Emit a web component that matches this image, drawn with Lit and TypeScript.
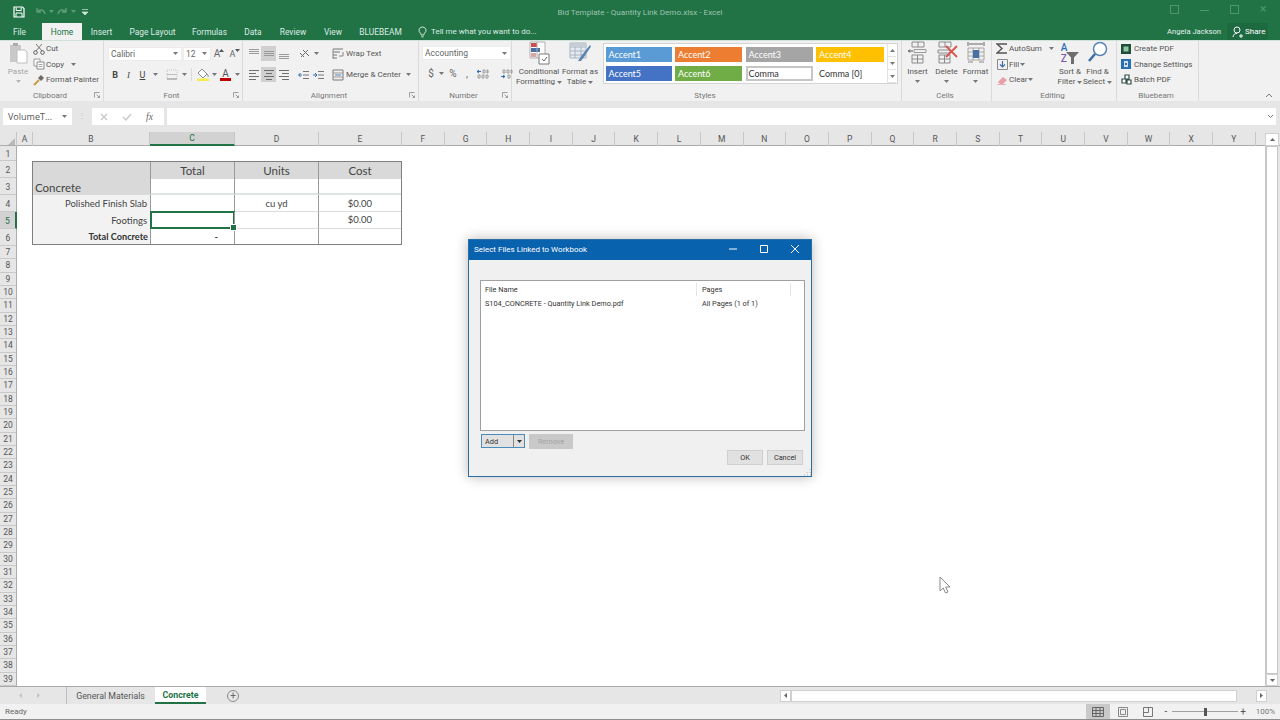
import { LitElement, html, css, svg } from "lit";
import { customElement } from "lit/decorators.js";

const ic = (w: number, h: number, inner: unknown) =>
  html`<svg width=${w} height=${h} viewBox="0 0 ${w} ${h}" fill="none">${inner}</svg>`;

const caret = (c = "#777") => ic(5, 3, svg`<path d="M0 0h5L2.5 3z" fill=${c}/>`);

const TABS = ["File", "Home", "Insert", "Page Layout", "Formulas", "Data", "Review", "View", "BLUEBEAM"];
const COLS = ["A", "B", "C", "D", "E", "F", "G", "H", "I", "J", "K", "L", "M", "N", "O", "P", "Q", "R", "S", "T", "U", "V", "W", "X", "Y"];
const ROWS = Array.from({ length: 39 }, (_, i) => i + 1);

const lines = (ys: number[], x0: number, x1: number, c = "#666") =>
  ys.map((y) => svg`<path d="M${x0} ${y + 0.5}H${x1}" stroke=${c}/>`);

const icons = {
  save: ic(12, 12, svg`<path d="M1 1h8.5L11 2.5V11H1z" stroke="#fff" stroke-width="1.2"/><path d="M3.2 1.5v3h5v-3M3 11V7h6v4" stroke="#fff"/>`),
  undo: ic(11, 9, svg`<path d="M2 1v4h4M2.5 5C4 2 9 2 10 7" stroke="#5e9d7c" stroke-width="1.4"/>`),
  redo: ic(11, 9, svg`<path d="M9 1v4H5M8.5 5C7 2 2 2 1 7" stroke="#5e9d7c" stroke-width="1.4"/>`),
  qat: ic(6, 6, svg`<path d="M0 .5h6M0 3h6L3 6z" stroke="#cfe5d9" fill="#cfe5d9" stroke-width=".7"/>`),
  bulb: ic(9, 12, svg`<path d="M4.5 1a3.4 3.4 0 0 0-2 6.2c.5.5.6 1 .7 1.8h2.6c.1-.8.2-1.3.7-1.8A3.4 3.4 0 0 0 4.5 1zM3.3 10.8h2.4" stroke="#d5e8dd"/>`),
  share: ic(12, 12, svg`<circle cx="5" cy="4" r="3" stroke="#fff"/><path d="M1 11c.3-2.5 2-3.6 4-3.6M7 10h4M9 8v4" stroke="#fff"/>`),
  paste: ic(22, 24, svg`<path d="M3 4h11v17H3z" fill="#c9c9c9"/><path d="M6 2h5v3H6z" fill="#adadad"/><path d="M10 9h8l2 2v11H10z" fill="#fff" stroke="#bdbdbd"/>`),
  cut: ic(12, 12, svg`<path d="M3 1l6 7M9 1L3 8" stroke="#777"/><circle cx="2.5" cy="9.5" r="1.8" stroke="#5a5a5a"/><circle cx="9.5" cy="9.5" r="1.8" stroke="#5a5a5a"/>`),
  copy: ic(12, 12, svg`<path d="M1 1h6v7H1z" fill="#fff" stroke="#9a9a9a"/><path d="M4 4h7v7H4z" fill="#fff" stroke="#8a8a8a"/><path d="M5.5 6.5h4M5.5 8.5h4" stroke="#a8a8a8"/>`),
  painter: ic(12, 12, svg`<path d="M1 11l5-5" stroke="#c79a3d" stroke-width="1.8"/><path d="M5 4l3 3 3-3-3-3z" fill="#6a6a6a"/>`),
  borders: ic(12, 11, svg`<path d="M1 1h10v9H1z" stroke="#c4c4c4" stroke-dasharray="1 1"/><path d="M1 5.5h10" stroke="#bdbdbd"/><path d="M1 10h10" stroke="#8f8f8f"/>`),
  fill: ic(14, 13, svg`<path d="M6 1l5 5-4 4-5-5z" fill="#fff" stroke="#8b8b8b"/><path d="M11 6c1 1.3 1.5 2 1 3" stroke="#8b8b8b"/><path d="M1 10.5h12V13H1z" fill="#f5ee4a"/>`),
  fontColor: html`<span class="fc-icon">A</span>`,
  alignV: (y: number) => ic(12, 11, svg`${lines([y, y + 2, y + 4], 1, 11, "#9a9a9a")}`),
  alignH: (kind: string) =>
    ic(12, 11, svg`<path d=${kind === "l" ? "M1 1.5h10M1 4.5h7M1 7.5h10M1 10.5h7" : kind === "c" ? "M1 1.5h10M3 4.5h6M1 7.5h10M3 10.5h6" : "M1 1.5h10M4 4.5h7M1 7.5h10M4 10.5h7"} stroke="#6e6e6e"/>`),
  orient: ic(12, 11, svg`<path d="M2 9l7-7M4 2l6 6M1 5l4 4" stroke="#6a6a6a"/>`),
  indent: ic(12, 10, svg`<path d="M5 1.5h6M5 5h6M5 8.5h6" stroke="#777"/><path d="M1 5h3" stroke="#2d6cb5"/><path d="M2.5 3L.5 5l2 2" stroke="#2d6cb5"/>`),
  outdent: ic(12, 10, svg`<path d="M5 1.5h6M5 5h6M5 8.5h6" stroke="#777"/><path d="M0 5h3" stroke="#2d6cb5"/><path d="M2 3l2 2-2 2" stroke="#2d6cb5"/>`),
  wrap: ic(12, 12, svg`<path d="M1 1h10M1 4h7M1 7h4M1 10h4" stroke="#777"/><path d="M1 1v10M11 4v4H7" stroke="#888"/>`),
  merge: ic(12, 12, svg`<path d="M1 1h10v10H1z" stroke="#7a7a7a"/><path d="M1 4h10M1 8h10" stroke="#9a9a9a"/><path d="M3 6h6" stroke="#4b7fbd"/>`),
  incDec: ic(13, 10, svg`<path d="M1 2.5h4M3 1L1 2.5 3 4" stroke="#2d6cb5"/><path d="M7 1h2v3H7zM11 1h1v3h-1zM2 6h2v3H2zM6 6h2v3H6zM10 6h2v3h-2z" stroke="#8a8a8a" stroke-width=".8"/>`),
  decDec: ic(13, 10, svg`<path d="M1 7.5h4M3 6l2 1.5L3 9" stroke="#2d6cb5"/><path d="M3 1h2v3H3zM7 1h2v3H7zM11 1h1v3h-1zM8 6h2v3H8z" stroke="#8a8a8a" stroke-width=".8"/>`),
  cond: ic(22, 24, svg`<path d="M2 1h15v16H2z" fill="#fff" stroke="#b0b0b0"/><path d="M3 2h6v4H3z" fill="#c7504f"/><path d="M3 7h9v4H3z" fill="#4a6fa5"/><path d="M3 12h5v4H3z" fill="#d8a7a5"/><path d="M9 1v16" stroke="#b0b0b0"/><path d="M11 13h10v10H11z" fill="#fff" stroke="#7a7a7a"/><path d="M14 18l2 2 3-4" stroke="#666"/>`),
  table: ic(24, 24, svg`<path d="M2 2h16v15H2z" fill="#e5ebf3" stroke="#a9b3bf"/><path d="M2 6h16M2 10h16M2 14h16M7 2v15M13 2v15" stroke="#a9b3bf"/><path d="M2 2h16v4H2z" fill="#c7cdd6"/><path d="M10 20l4-6 8-10c1 1 1 2 0 3l-6 9-3 4z" fill="#5a83b4"/>`),
  insert: ic(20, 23, svg`<path d="M4 1h12v5H4zM10 1v5M4 14h11v8H4zM9.5 14v8M4 18h11" stroke="#8b8b8b"/><path d="M6 8.5h12v3H6z" stroke="#9a9a9a"/><path d="M0 10h5M2 8.5L.5 10 2 11.5" stroke="#555"/>`),
  del: ic(22, 23, svg`<path d="M3 1h12v5H3zM9 1v5M3 14h11v8H3zM8.5 14v8M3 18h11M2 9h12v3H2z" stroke="#8b8b8b"/><path d="M10 5l11 11M21 5L10 16" stroke="#d9534f" stroke-width="1.8"/>`),
  format: ic(20, 23, svg`<path d="M2 1v4M18 1v4M3 3h14" stroke="#666"/><path d="M2 7h16v12H2zM7 7v12M13 7v12M2 11h16M2 15h16" stroke="#a6a6a6"/><path d="M7 9h6v8H7z" fill="#4a6fa5"/><path d="M2 21h5M13 21h5" stroke="#888"/>`),
  sigma: ic(12, 11, svg`<path d="M11 1H1l5 4.5L1 10h10" stroke="#555" stroke-width="1.4"/>`),
  fillDown: ic(11, 11, svg`<path d="M.5.5h10v10H.5z" stroke="#8a8a8a"/><path d="M5.5 2v6M3 5.5L5.5 8 8 5.5" stroke="#3a6ea5" stroke-width="1.2"/>`),
  eraser: ic(11, 11, svg`<path d="M1 8l5-5 4 3-4 4H3z" fill="#e8a0a6"/><path d="M0 10.5h9" stroke="#e0b4b8"/>`),
  funnel: ic(13, 13, svg`<path d="M0 1h13L8 6.5V13H5V6.5z" fill="#6e6e6e"/>`),
  find: ic(20, 23, svg`<circle cx="12" cy="8" r="6.5" fill="#fff" stroke="#5a85b5" stroke-width="1.5"/><path d="M7 13l-6 7" stroke="#3a6ea5" stroke-width="2.5"/>`),
  createPdf: ic(10, 10, svg`<path d="M0 0h10v10H0z" fill="#1f4d3a"/><path d="M2.5 2.5h5v5h-5z" fill="#8fc9a3"/>`),
  settings: ic(10, 10, svg`<path d="M0 0h10v10H0z" fill="#2a6fb0"/><path d="M3 2h4v6H3z" fill="#cfe3f4"/><path d="M4 4h2v2H4z" fill="#2a6fb0"/>`),
  batch: ic(11, 11, svg`<path d="M4 1h4v4H4zM1 5h4v4H1zM6 6h4v4H6z" fill="#fff" stroke="#2f4f45" stroke-width="1.2"/>`),
  launcher: ic(6, 6, svg`<path d="M.5 5.5v-5h5M2.5 2.5l3 3M3.5 5.5h2v-2" stroke="#8a8a8a" stroke-width=".8"/>`),
  x: ic(8, 8, svg`<path d="M1 1l6 6M7 1L1 7" stroke="#c6c6c6" stroke-width="1.3"/>`),
  check: ic(10, 8, svg`<path d="M1 4l3 3 5-6" stroke="#c6c6c6" stroke-width="1.3"/>`),
  min: ic(10, 10, svg`<path d="M1 5h8" stroke="#fff"/>`),
  max: ic(10, 10, svg`<path d="M1.5 1.5h7v7h-7z" stroke="#fff"/>`),
  close: ic(10, 10, svg`<path d="M1 1l8 8M9 1L1 9" stroke="#fff"/>`),
  grip: ic(8, 8, svg`<path d="M7 1v1M4 4v1M7 4v1M1 7h1M4 7h1M7 7h1" stroke="#b0b0b0"/>`),
  cursor: ic(12, 18, svg`<path d="M1 1v14l3.2-3 2.3 5 2.5-1-2.3-5H11z" fill="#fff" stroke="#8b8b8b"/>`),
  normal: ic(12, 10, svg`<path d="M.5.5h11v9H.5zM.5 3.5h11M.5 6.5h11M4 .5v9M8 .5v9" stroke="#666"/>`),
  layout: ic(10, 10, svg`<path d="M.5.5h9v9h-9z" stroke="#888"/><path d="M2.5 2.5h5v5h-5z" stroke="#888"/>`),
  pageBreak: ic(10, 10, svg`<path d="M.5.5h9v9h-9zM5.5.5v5h-5" stroke="#777"/>`),
};

@customElement("app-root")
export class AppRoot extends LitElement {
  static styles = css`
    :host {
      display: block;
      width: 1280px;
      height: 720px;
      overflow: hidden;
      position: relative;
      font-family: Roboto, "Open Sans", sans-serif;
      font-size: 8px;
      color: #555;
      background: #fff;
    }
    * { box-sizing: border-box; }
    svg { display: block; flex: none; }
    .app { display: flex; flex-direction: column; height: 720px; }

    .titlebar {
      height: 23px;
      background: #217346;
      display: grid;
      grid-template-columns: 1fr auto 1fr;
      align-items: center;
    }
    .qat { display: flex; align-items: center; padding-left: 13px; gap: 3px; }
    .qat .spacer { width: 4px; }
    .qat .push { margin-left: 3px; }
    .doc { color: #9cc4ad; font-size: 8.1px; }
    .win { display: flex; justify-content: flex-end; gap: 21px; padding-right: 11px; }
    .win .ctl { width: 9px; height: 9px; border: 1px solid #4f9570; }
    .win .ctl.dash { border-width: 1px 0 0; margin-top: 5px; }
    .win .ctl.none { border: none; color: #4f9570; font-size: 12px; line-height: 9px; }

    .tabs {
      height: 17px;
      background: #217346;
      display: grid;
      grid-template-columns: 42px 40px 39px 63px 51px 36px 44px 36px 59px 1fr auto;
      align-items: stretch;
      color: #dcebe3;
      font-size: 8.4px;
    }
    .tab { display: flex; align-items: center; justify-content: center; }
    .tab.first { padding-right: 3px; }
    .tab.on { background: #f1f1f1; color: #217346; }
    .tell { display: flex; align-items: center; gap: 4px; padding-left: 8px; font-size: 8px; }
    .user { display: flex; align-items: center; color: #e6f1eb; font-size: 7.6px; }
    .share {
      display: flex; align-items: center; gap: 1px;
      margin: 0 12px 0 6px; padding-left: 5px; height: 17px; width: 41px;
      background: #1e6a40; color: #fff; font-size: 8px;
    }

    .ribbon {
      height: 61px;
      background: #f1f1f1;
      display: flex;
      border-top: 1px solid #cfe3d8;
    }
    .group {
      display: flex; flex-direction: column; flex: none;
      border-right: 1px solid #dadada; height: 60px;
    }
    .g-clip { width: 104px; }
    .g-font { width: 139px; }
    .g-align { width: 176px; }
    .g-num { width: 93px; }
    .g-style { width: 390px; }
    .g-cells { width: 90px; }
    .g-edit { width: 125px; }
    .g-blue { width: 82px; }
    .group-body { flex: 1; display: flex; min-height: 0; }
    .group-label {
      height: 12px; display: grid; grid-template-columns: 1fr auto 1fr;
      align-items: center; color: #777; padding-right: 3px;
    }
    .group-label .launch { justify-self: end; }

    .big {
      display: flex; flex-direction: column; align-items: center;
      line-height: 10px; color: #555; flex: none;
    }
    .big .pic { height: 23px; display: flex; align-items: center; justify-content: center; margin-bottom: 3px; }
    .big .c { height: 8px; display: flex; align-items: center; justify-content: center; }
    .big .t { display: flex; align-items: center; gap: 2px; white-space: nowrap; }

    .paste { width: 28px; margin-left: 4px; color: #a5a5a5; }
    .stack { display: flex; flex-direction: column; }
    .stack .ln { height: 15.5px; display: flex; align-items: center; gap: 1px; white-space: nowrap; }
    .clip-stack { margin-left: 1px; }

    .two { display: flex; flex-direction: column; gap: 6px; padding-top: 5px; }
    .rw { display: flex; align-items: center; height: 15px; }
    .ib { height: 15px; display: flex; align-items: center; justify-content: center; flex: none; }
    .w6 { width: 6px; } .w7 { width: 7px; } .w8 { width: 8px; } .w10 { width: 10px; }
    .w13 { width: 13px; } .w14 { width: 14px; } .w15 { width: 15px; } .w16 { width: 16px; }
    .on-bg { background: #d0d0d0; }
    .vsep { width: 1px; height: 13px; background: #d8d8d8; margin: 0 3px; flex: none; }
    .gap6 { width: 6px; flex: none; }
    .gap4 { width: 4px; flex: none; }
    .font-pad { padding-left: 4px; }
    .combo {
      height: 14px; background: #fff; border: 1px solid #ececec;
      display: flex; align-items: center; justify-content: space-between;
      padding: 0 3px 0 2px; color: #666; font-size: 8.5px; flex: none;
    }
    .c-font { width: 74px; }
    .c-size { width: 28px; margin-left: 1px; }
    .c-acc { width: 89px; }
    .gl { font-size: 10px; color: #666; }
    .gl.b { font-weight: 700; font-size: 9px; color: #444; }
    .gl.i { font-style: italic; font-size: 9px; color: #444; font-family: "Liberation Serif", serif; }
    .gl.u { text-decoration: underline; font-size: 9px; color: #444; }
    .gl.s { font-size: 9px; }
    .sup { width: 4px; height: 3px; margin: -6px 0 0 0; display: flex; }
    .fc-icon { display: flex; justify-content: center; border-bottom: 3px solid #c00000; height: 12px; line-height: 9px; font-size: 10px; width: 11px; color: #555; }
    .align-pad { padding-left: 3px; }
    .tx-gap { margin-left: 2px; white-space: nowrap; }
    .wrapbtn { margin-left: 13px; }
    .mergebtn { margin-left: 5px; }
    .mcaret { margin-left: 3px; }
    .num-pad { padding-left: 3px; }
    .num-row { padding-left: 4px; }
    .num-row .spread { margin-left: 9px; }

    .cond { width: 46px; margin-left: 4px; }
    .fmt { width: 36px; }
    .gallery {
      margin: 2px 0 0 5px; width: 295px; height: 41px;
      background: #fff; border: 1px solid #d4d4d4; display: flex; flex: none;
    }
    .swatches {
      flex: 1; display: grid; grid-template-columns: 66px 67px 67px 68px;
      grid-template-rows: 15px 15px; gap: 4px 3.5px; padding: 3px 0 0 1.5px;
      font-family: Lato, "Open Sans", sans-serif; font-size: 9px;
    }
    .sw { display: flex; align-items: center; padding-left: 3px; color: #fff; }
    .a1 { background: #5b9bd5; } .a2 { background: #ed7d31; } .a3 { background: #a5a5a5; }
    .a4 { background: #ffc000; } .a5 { background: #4472c4; } .a6 { background: #70ad47; }
    .comma { background: #fff; color: #333; outline: 2px solid #c6c6c6; outline-offset: -2px; }
    .comma0 { background: #fff; color: #333; }
    .gscroll { width: 9px; margin-right: 1px; display: flex; flex-direction: column; border-left: 1px solid #e3e3e3; }
    .gscroll .b { flex: 1; display: flex; align-items: center; justify-content: center; border-bottom: 1px solid #e3e3e3; }
    .up { transform: rotate(180deg); }
    .cell-btn { width: 29px; }
    .cell-pad { padding-left: 1px; }
    .edit-stack { padding-left: 4px; width: 64px; flex: none; }
    .edit-stack .pic { width: 12px; display: flex; justify-content: center; flex: none; }
    .sortbtn { width: 28px; }
    .findbtn { width: 27px; }
    .sort-icon { display: flex; align-items: flex-end; justify-content: center; height: 23px; width: 26px; }
    .az-col { display: flex; flex-direction: column; font-size: 10px; font-weight: 500; line-height: 10.5px; margin-right: -1px; }
    .az-col .a { color: #2f6fb5; }
    .az-col .z { color: #7e57a8; }
    .blue-stack { padding-left: 4px; }
    .blue-stack .ln { gap: 3px; }
    .blue-stack .pic { width: 10px; display: flex; justify-content: center; flex: none; }
    .collapse { flex: 1; display: flex; align-items: flex-end; justify-content: flex-end; padding: 0 7px 3px 0; }

    .fbar {
      height: 31px; background: #e6e6e6; padding: 7px 4px 0 3px;
      display: flex; align-items: flex-start; flex: none;
    }
    .namebox {
      width: 69px; height: 17px; background: #fff; display: flex; align-items: center;
      justify-content: space-between; padding: 0 5px; font-family: "Open Sans", sans-serif; font-size: 9px; color: #555;
    }
    .dots { width: 20px; text-align: center; line-height: 15px; color: #bbb; font-size: 8px; }
    .fx {
      width: 72px; height: 17px; background: #fff; display: flex; align-items: center;
      gap: 14px; padding-left: 8px;
    }
    .fx i { font-family: "Liberation Serif", serif; font-size: 9.5px; color: #666; }
    .finput {
      flex: 1; height: 17px; margin-left: 3px; background: #fff; display: flex; align-items: center;
      justify-content: flex-end; padding-right: 2px;
    }

    .colhead {
      height: 14px; background: #e6e6e6; display: grid; flex: none;
      grid-template-columns: 17px 16px 117px 85px 84px 83px repeat(20, 42.7px) 1fr 15px;
      border-bottom: 1px solid #ababab; font-size: 8.5px; color: #555;
    }
    .ch { display: flex; align-items: center; justify-content: center; border-right: 1px solid #c6c6c6; padding-bottom: 1px; }
    .ch.sel { background: #d2d2d2; border-bottom: 2px solid #217346; height: 14px; color: #217346; }
    .ch.plain { border: none; }
    .corner { align-items: flex-end; justify-content: flex-end; padding: 0 1px 1px 0; }
    .vbtn { display: flex; align-items: center; justify-content: center; background: #fff; border: 1px solid #d0d0d0; margin: 1px 1px 0 0; }

    .sheet { flex: 1; display: flex; min-height: 0; background: #fff; }
    .rowhead { width: 17px; background: #e6e6e6; display: flex; flex-direction: column; border-right: 1px solid #ababab; flex: none; font-size: 8.5px; }
    .rh { height: 13.34px; display: flex; align-items: center; justify-content: center; border-bottom: 1px solid #c9c9c9; color: #555; flex: none; }
    .rh.r1 { height: 15px; padding-top: 2px; }
    .rh.tall { height: 17px; padding-top: 2px; }
    .rh.sel { background: #d2d2d2; color: #217346; margin-right: -1px; border-right: 2px solid #217346; }
    .canvas { flex: 1; padding: 15px 0 0 15px; }
    .tbl {
      width: 370px; height: 84px; border: 1.5px solid #7f7f7f; display: grid;
      grid-template-columns: 117px 84px 84px 1fr; grid-template-rows: 16.5px 16.5px 17px 16.5px 1fr;
      font-family: Lato, "Open Sans", sans-serif; color: #444; font-size: 9.5px;
    }
    .cl { display: flex; align-items: center; justify-content: center; border-left: 1px solid #9a9a9a; border-bottom: 1px solid #dcdcdc; position: relative; }
    .cl.h { background: #d9d9d9; font-size: 11.5px; border-bottom: none; }
    .cl.n { border-left: none; background: #d9d9d9; grid-row: span 2; align-items: flex-end; justify-content: flex-start; padding-left: 2px; font-size: 11.5px; line-height: 14px; border-bottom: none; }
    .cl.t3 { border-bottom: 2px solid #dfe6e2; }
    .cl.lab { background: #f2f2f2; border-left: none; justify-content: flex-end; padding-right: 3px; border-bottom: none; }
    .cl.tot { font-weight: 700; font-size: 9.2px; padding-right: 2px; color: #333; }
    .cl.last { border-bottom: none; }
    .cl.dash { justify-content: flex-end; padding-right: 16px; font-weight: 700; }
    .cl.active::after {
      content: ""; position: absolute; inset: -1px; border: 2px solid #217346;
    }
    .cl.active::before {
      content: ""; position: absolute; right: -3px; bottom: -3px; width: 5px; height: 5px;
      background: #217346; border: 1px solid #fff; z-index: 1;
    }
    .vscroll { width: 15px; flex: none; background: #e6e6e6; display: flex; flex-direction: column; border-left: 1px solid #c9c9c9; padding-right: 2px; }
    .vthumb { flex: 1; background: #fff; border: 1px solid #c6c6c6; }
    .vb { height: 12px; background: #fff; border: 1px solid #d0d0d0; display: flex; align-items: center; justify-content: center; flex: none; }

    .sheetbar {
      height: 18px; background: #e6e6e6; display: flex; align-items: stretch; flex: none;
      border-top: 1px solid #a9a9a9; font-size: 8.8px;
    }
    .nav { width: 67px; display: flex; align-items: center; justify-content: center; gap: 13px; padding-right: 8px; border-right: 1px solid #bdbdbd; flex: none; }
    .stab { width: 87px; display: flex; align-items: center; justify-content: center; color: #555; flex: none; }
    .stab.on { width: 51px; margin-left: 1px; background: #fff; color: #217346; font-weight: 700; border-bottom: 2px solid #217346; }
    .plus { margin-left: 21px; width: 14px; display: flex; align-items: center; }
    .plus span { width: 12px; height: 12px; border: 1px solid #8a8a8a; border-radius: 50%; display: flex; align-items: center; justify-content: center; color: #666; font-size: 10px; line-height: 10px; }
    .hs { margin-left: 539px; width: 487px; display: flex; align-items: center; }
    .hs .b { width: 11px; height: 12px; background: #fff; border: 1px solid #cfcfcf; display: flex; align-items: center; justify-content: center; flex: none; }
    .hs .thumb { width: 446px; height: 12px; background: #fff; border: 1px solid #d0d0d0; flex: none; }
    .hs .rest { flex: 1; }
    .r90 { transform: rotate(-90deg); }
    .l90 { transform: rotate(90deg); }

    .status {
      height: 16px; background: #f1f1f1; display: flex; align-items: center; flex: none;
      border-bottom: 1px solid #8e8e8e; padding-left: 5px; color: #666;
    }
    .views { margin-left: auto; display: flex; align-items: center; height: 15px; }
    .vw { height: 15px; display: flex; align-items: center; justify-content: center; flex: none; width: 25px; }
    .vw.on { background: #c9c9c9; width: 24px; }
    .zoom { display: flex; align-items: center; margin-left: 2px; }
    .zoom .pm { width: 8px; text-align: center; color: #555; font-size: 10px; flex: none; }
    .slider { width: 66px; height: 1px; background: #a0a0a0; margin: 0 1px 0 2px; display: flex; align-items: center; justify-content: center; flex: none; }
    .slider span { width: 3px; height: 8px; background: #555; flex: none; }
    .pct { width: 33px; text-align: right; padding-right: 5px; flex: none; color: #777; }

    .dialog {
      position: absolute; left: 468px; top: 239px; width: 344px; height: 238px;
      background: #f0f0f0; border: 1px solid #2c6ea3;
      box-shadow: 0 0 12px rgba(0, 0, 0, 0.28); display: flex; flex-direction: column;
      color: #333; font-size: 7.3px;
    }
    .dtitle {
      height: 20px; background: #0862ae; color: #fff; display: flex; align-items: center;
      padding: 0 0 2px 5px; flex: none; font-size: 8px;
    }
    .dtitle .ctls { margin-left: auto; display: flex; gap: 21px; padding-right: 11px; }
    .dbody { flex: 1; padding: 20px 6px 0 11px; display: flex; flex-direction: column; position: relative; }
    .list { height: 151px; background: #fff; border: 1px solid #a0a0a0; padding-top: 1px; flex: none; }
    .lrow { display: grid; grid-template-columns: 216px 94px 1fr; height: 14px; align-items: center; }
    .lrow span { padding-left: 4px; white-space: nowrap; height: 13px; display: flex; align-items: center; }
    .lhead span:nth-child(1), .lhead span:nth-child(2) { border-right: 1px solid #e5e5e5; }
    .lhead span:nth-child(2), .data span:nth-child(2) { padding-left: 5px; }
    .dbtns { display: flex; gap: 4px; margin-top: 3px; padding-left: 1px; align-items: flex-start; }
    .split {
      width: 44px; height: 14px; border: 1.5px solid #4a8bbb; background: #e1e1e1;
      display: flex; align-items: center;
    }
    .split .lab { width: 31px; padding-left: 3px; }
    .split .arr { flex: 1; height: 100%; border-left: 1px solid #888; display: flex; align-items: center; justify-content: center; }
    .disabled { width: 44px; height: 15px; background: #c9c9c9; color: #a3a3a3; display: flex; align-items: center; justify-content: center; }
    .dfoot { display: flex; justify-content: flex-end; gap: 4px; padding-right: 2px; margin-top: 1px; }
    .btn { width: 36px; height: 15px; background: #e1e1e1; border: 1px solid #cfcfcf; display: flex; align-items: center; justify-content: center; }
    .grip { position: absolute; right: 0; bottom: 0; }
    .cursor { position: absolute; left: 939px; top: 576px; }
  `;

  renderRibbon() {
    return html`
      <div class="ribbon">
        <div class="group g-clip">
          <div class="group-body">
            <div class="big paste">
              <div class="pic">${icons.paste}</div>
              <div class="t">Paste</div>
              <div class="c">${caret("#b5b5b5")}</div>
            </div>
            <div class="stack clip-stack">
              <div class="ln">${icons.cut} Cut</div>
              <div class="ln">${icons.copy} Copy &nbsp;&nbsp;${caret()}</div>
              <div class="ln">${icons.painter} Format Painter</div>
            </div>
          </div>
          ${this.label("Clipboard")}
        </div>
        <div class="group g-font">
          <div class="group-body">
            <div class="two font-pad">
              <div class="rw">
                <div class="combo c-font">Calibri ${caret()}</div>
                <div class="combo c-size">12 ${caret()}</div>
                <div class="ib w16"><span class="gl">A</span><span class="sup up">${caret("#555")}</span></div>
                <div class="ib w15"><span class="gl s">A</span><span class="sup">${caret("#555")}</span></div>
              </div>
              <div class="rw">
                <div class="ib w14"><span class="gl b">B</span></div>
                <div class="ib w13"><span class="gl i">I</span></div>
                <div class="ib w15"><span class="gl u">U</span></div>
                <div class="ib w10">${caret()}</div>
                <div class="gap4"></div>
                <div class="ib w16">${icons.borders}</div>
                <div class="ib w8">${caret()}</div>
                <div class="vsep"></div>
                <div class="ib w16">${icons.fill}</div>
                <div class="ib w7">${caret()}</div>
                <div class="ib w15">${icons.fontColor}</div>
                <div class="ib w8">${caret()}</div>
              </div>
            </div>
          </div>
          ${this.label("Font")}
        </div>
        <div class="group g-align">
          <div class="group-body">
            <div class="two align-pad">
              <div class="rw">
                <div class="ib w15">${icons.alignV(1)}</div>
                <div class="ib w15 on-bg">${icons.alignV(3)}</div>
                <div class="ib w15">${icons.alignV(6)}</div>
                <div class="gap6"></div>
                <div class="ib w16">${icons.orient}</div>
                <div class="ib w6">${caret()}</div>
                <div class="rw wrapbtn">${icons.wrap}<span class="tx-gap">Wrap Text</span></div>
              </div>
              <div class="rw">
                <div class="ib w15">${icons.alignH("l")}</div>
                <div class="ib w15 on-bg">${icons.alignH("c")}</div>
                <div class="ib w15">${icons.alignH("r")}</div>
                <div class="gap6"></div>
                <div class="ib w14">${icons.indent}</div>
                <div class="ib w16">${icons.outdent}</div>
                <div class="rw mergebtn">${icons.merge}<span class="tx-gap">Merge &amp; Center</span></div>
                <div class="ib w10 mcaret">${caret()}</div>
              </div>
            </div>
          </div>
          ${this.label("Alignment")}
        </div>
        <div class="group g-num">
          <div class="group-body">
            <div class="two num-pad">
              <div class="combo c-acc">Accounting ${caret()}</div>
              <div class="rw num-row">
                <div class="ib w10"><span class="gl">$</span></div>
                <div class="ib w10">${caret()}</div>
                <div class="ib w14"><span class="gl">%</span></div>
                <div class="ib w14"><span class="gl">,</span></div>
                <div class="ib w16">${icons.incDec}</div>
                <div class="ib w15 spread">${icons.decDec}</div>
              </div>
            </div>
          </div>
          ${this.label("Number")}
        </div>
        <div class="group g-style">
          <div class="group-body">
            <div class="big cond">
              <div class="pic">${icons.cond}</div>
              <div class="t">Conditional</div>
              <div class="t">Formatting ${caret()}</div>
            </div>
            <div class="big fmt">
              <div class="pic">${icons.table}</div>
              <div class="t">Format as</div>
              <div class="t">Table ${caret()}</div>
            </div>
            <div class="gallery">
              <div class="swatches">
                <div class="sw a1">Accent1</div>
                <div class="sw a2">Accent2</div>
                <div class="sw a3">Accent3</div>
                <div class="sw a4">Accent4</div>
                <div class="sw a5">Accent5</div>
                <div class="sw a6">Accent6</div>
                <div class="sw comma">Comma</div>
                <div class="sw comma0">Comma [0]</div>
              </div>
              <div class="gscroll">
                <div class="b"><span class="up">${caret()}</span></div>
                <div class="b">${caret()}</div>
                <div class="b">${caret()}</div>
              </div>
            </div>
          </div>
          ${this.label("Styles", false)}
        </div>
        <div class="group g-cells">
          <div class="group-body cell-pad">
            <div class="big cell-btn"><div class="pic">${icons.insert}</div><div class="t">Insert</div><div class="c">${caret()}</div></div>
            <div class="big cell-btn"><div class="pic">${icons.del}</div><div class="t">Delete</div><div class="c">${caret()}</div></div>
            <div class="big cell-btn"><div class="pic">${icons.format}</div><div class="t">Format</div><div class="c">${caret()}</div></div>
          </div>
          ${this.label("Cells", false)}
        </div>
        <div class="group g-edit">
          <div class="group-body">
            <div class="stack edit-stack">
              <div class="ln"><span class="pic">${icons.sigma}</span>AutoSum &nbsp;&nbsp;${caret()}</div>
              <div class="ln"><span class="pic">${icons.fillDown}</span>Fill ${caret()}</div>
              <div class="ln"><span class="pic">${icons.eraser}</span>Clear ${caret()}</div>
            </div>
            <div class="big sortbtn">
              <div class="pic"><span class="sort-icon"><span class="az-col"><span class="a">A</span><span class="z">Z</span></span>${icons.funnel}</span></div>
              <div class="t">Sort &amp;</div>
              <div class="t">Filter ${caret()}</div>
            </div>
            <div class="big findbtn"><div class="pic">${icons.find}</div><div class="t">Find &amp;</div><div class="t">Select ${caret()}</div></div>
          </div>
          ${this.label("Editing", false)}
        </div>
        <div class="group g-blue">
          <div class="group-body">
            <div class="stack blue-stack">
              <div class="ln"><span class="pic">${icons.createPdf}</span>Create PDF</div>
              <div class="ln"><span class="pic">${icons.settings}</span>Change Settings</div>
              <div class="ln"><span class="pic">${icons.batch}</span>Batch PDF</div>
            </div>
          </div>
          ${this.label("Bluebeam", false)}
        </div>
        <div class="collapse">${ic(8, 5, svg`<path d="M1 4l3-3 3 3" stroke="#777"/>`)}</div>
      </div>
    `;
  }

  label(text: string, launcher = true) {
    return html`<div class="group-label"><span></span><span>${text}</span>${launcher ? html`<span class="launch">${icons.launcher}</span>` : html`<span></span>`}</div>`;
  }

  renderSheet() {
    return html`
      <div class="colhead">
        <div class="ch corner">${ic(7, 7, svg`<path d="M7 0v7H0z" fill="#b9b9b9"/>`)}</div>
        ${COLS.map((c) => html`<div class="ch ${c === "C" ? "sel" : ""}">${c}</div>`)}
        <div class="ch plain"></div>
        <div class="vbtn"><span class="up">${caret("#666")}</span></div>
      </div>
      <div class="sheet">
        <div class="rowhead">
          ${ROWS.map(
            (r) => html`<div class="rh ${r === 1 ? "r1" : ""} ${r >= 2 && r <= 6 ? "tall" : ""} ${r === 5 ? "sel" : ""}">${r}</div>`
          )}
        </div>
        <div class="canvas">
          <div class="tbl">
            <div class="cl n">Concrete</div>
            <div class="cl h">Total</div>
            <div class="cl h">Units</div>
            <div class="cl h">Cost</div>
            <div class="cl t3"></div>
            <div class="cl t3"></div>
            <div class="cl t3"></div>
            <div class="cl lab">Polished Finish Slab</div>
            <div class="cl"></div>
            <div class="cl">cu yd</div>
            <div class="cl">$0.00</div>
            <div class="cl lab">Footings</div>
            <div class="cl active"></div>
            <div class="cl"></div>
            <div class="cl">$0.00</div>
            <div class="cl lab tot">Total Concrete</div>
            <div class="cl last dash">-</div>
            <div class="cl last"></div>
            <div class="cl last"></div>
          </div>
        </div>
        <div class="vscroll">
          <div class="vthumb"></div>
          <div class="vb">${caret("#666")}</div>
        </div>
      </div>
    `;
  }

  renderDialog() {
    return html`
      <div class="dialog">
        <div class="dtitle">
          Select Files Linked to Workbook
          <div class="ctls">${icons.min}${icons.max}${icons.close}</div>
        </div>
        <div class="dbody">
          <div class="list">
            <div class="lrow lhead"><span>File Name</span><span>Pages</span><span></span></div>
            <div class="lrow data"><span>S104_CONCRETE - Quantity Link Demo.pdf</span><span>All Pages (1 of 1)</span><span></span></div>
          </div>
          <div class="dbtns">
            <div class="split"><span class="lab">Add</span><span class="arr">${caret("#333")}</span></div>
            <div class="disabled">Remove</div>
          </div>
          <div class="dfoot">
            <div class="btn">OK</div>
            <div class="btn">Cancel</div>
          </div>
          <div class="grip">${icons.grip}</div>
        </div>
      </div>
    `;
  }

  render() {
    return html`
      <div class="app">
        <div class="titlebar">
          <div class="qat">${icons.save}<span class="spacer"></span>${icons.undo}${caret("#5e9d7c")}${icons.redo}${caret("#5e9d7c")}<span class="push">${icons.qat}</span></div>
          <div class="doc">Bid Template - Quantity Link Demo.xlsx - Excel</div>
          <div class="win"><span class="ctl"></span><span class="ctl dash"></span><span class="ctl"></span><span class="ctl none">×</span></div>
        </div>
        <div class="tabs">
          ${TABS.map((t, i) => html`<div class="tab ${i === 0 ? "first" : ""} ${t === "Home" ? "on" : ""}">${t}</div>`)}
          <div class="tell">${icons.bulb} Tell me what you want to do...</div>
          <div class="user">Angela Jackson<div class="share">${icons.share} Share</div></div>
        </div>
        ${this.renderRibbon()}
        <div class="fbar">
          <div class="namebox">VolumeT... ${caret()}</div>
          <div class="dots">⋮</div>
          <div class="fx">${icons.x}${icons.check}<i>fx</i></div>
          <div class="finput">${ic(7, 5, svg`<path d="M1 1l2.5 2.5L6 1" stroke="#777"/>`)}</div>
        </div>
        ${this.renderSheet()}
        <div class="sheetbar">
          <div class="nav"><span class="l90">${caret("#c4c4c4")}</span><span class="r90">${caret("#c4c4c4")}</span></div>
          <div class="stab">General Materials</div>
          <div class="stab on">Concrete</div>
          <div class="plus"><span>+</span></div>
          <div class="hs">
            <div class="b"><span class="l90">${caret("#666")}</span></div>
            <div class="thumb"></div>
            <div class="rest"></div>
            <div class="b"><span class="r90">${caret("#666")}</span></div>
          </div>
        </div>
        <div class="status">
          Ready
          <div class="views">
            <div class="vw on">${icons.normal}</div>
            <div class="vw">${icons.layout}</div>
            <div class="vw">${icons.pageBreak}</div>
          </div>
          <div class="zoom">
            <span class="pm">-</span>
            <div class="slider"><span></span></div>
            <span class="pm">+</span>
            <span class="pct">100%</span>
          </div>
        </div>
      </div>
      ${this.renderDialog()}
      <div class="cursor">${icons.cursor}</div>
    `;
  }
}
